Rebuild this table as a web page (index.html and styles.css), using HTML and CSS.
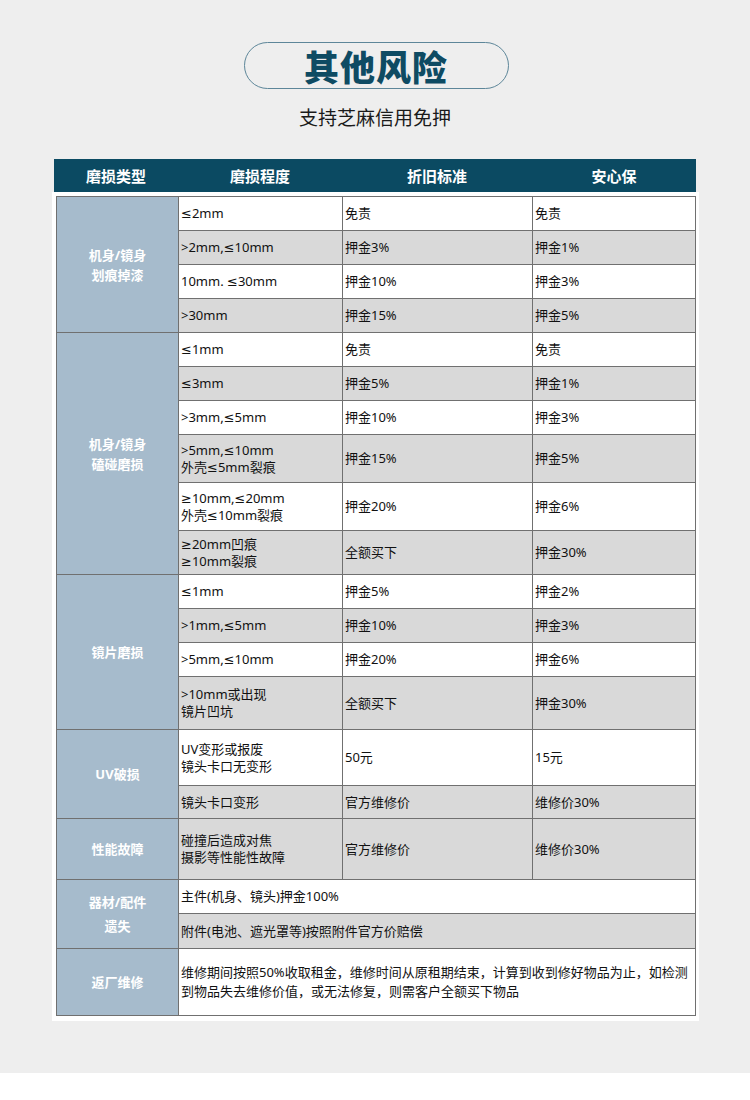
FILE: index.html
```html
<!DOCTYPE html>
<html lang="zh">
<head>
<meta charset="utf-8">
<link rel="stylesheet" href="styles.css">
</head>
<body>
<div class="page">
  <div class="title-wrap">
    <div class="pill"><h1 class="title">其他风险</h1></div>
    <p class="subtitle">支持芝麻信用免押</p>
  </div>
  <div class="panel">
    <div class="thead">
      <div>磨损类型</div>
      <div>磨损程度</div>
      <div>折旧标准</div>
      <div>安心保</div>
    </div>
    <div class="tbody">
      <table class="grid">
        <colgroup>
          <col class="c1"><col class="c2"><col class="c3"><col class="c4">
        </colgroup>
        <tr class="h34"><td class="cat" rowspan="4">机身/镜身<br>划痕掉漆</td><td>≤2mm</td><td>免责</td><td>免责</td></tr>
        <tr class="h34 g"><td>&gt;2mm,≤10mm</td><td>押金3%</td><td>押金1%</td></tr>
        <tr class="h34"><td>10mm. ≤30mm</td><td>押金10%</td><td>押金3%</td></tr>
        <tr class="h34 g"><td>&gt;30mm</td><td>押金15%</td><td>押金5%</td></tr>

        <tr class="h34"><td class="cat" rowspan="6">机身/镜身<br>磕碰磨损</td><td>≤1mm</td><td>免责</td><td>免责</td></tr>
        <tr class="h34 g"><td>≤3mm</td><td>押金5%</td><td>押金1%</td></tr>
        <tr class="h34"><td>&gt;3mm,≤5mm</td><td>押金10%</td><td>押金3%</td></tr>
        <tr class="h48 g"><td>&gt;5mm,≤10mm<br>外壳≤5mm裂痕</td><td>押金15%</td><td>押金5%</td></tr>
        <tr class="h48"><td>≥10mm,≤20mm<br>外壳≤10mm裂痕</td><td>押金20%</td><td>押金6%</td></tr>
        <tr class="h44 g"><td>≥20mm凹痕<br>≥10mm裂痕</td><td>全额买下</td><td>押金30%</td></tr>

        <tr class="h34"><td class="cat" rowspan="4">镜片磨损</td><td>≤1mm</td><td>押金5%</td><td>押金2%</td></tr>
        <tr class="h34 g"><td>&gt;1mm,≤5mm</td><td>押金10%</td><td>押金3%</td></tr>
        <tr class="h34"><td>&gt;5mm,≤10mm</td><td>押金20%</td><td>押金6%</td></tr>
        <tr class="h53 g"><td>&gt;10mm或出现<br>镜片凹坑</td><td>全额买下</td><td>押金30%</td></tr>

        <tr class="h56"><td class="cat" rowspan="2">UV破损</td><td>UV变形或报废<br>镜头卡口无变形</td><td>50元</td><td>15元</td></tr>
        <tr class="h33 g"><td>镜头卡口变形</td><td>官方维修价</td><td>维修价30%</td></tr>

        <tr class="h61 g"><td class="cat">性能故障</td><td>碰撞后造成对焦<br>摄影等性能性故障</td><td>官方维修价</td><td>维修价30%</td></tr>

        <tr class="h34"><td class="cat tall" rowspan="2">器材/配件<br>遗失</td><td colspan="3">主件(机身、镜头)押金100%</td></tr>
        <tr class="h35 g"><td colspan="3">附件(电池、遮光罩等)按照附件官方价赔偿</td></tr>

        <tr class="h67"><td class="cat">返厂维修</td><td colspan="3" class="long">维修期间按照50%收取租金，维修时间从原租期结束，计算到收到修好物品为止，如检测<br>到物品失去维修价值，或无法修复，则需客户全额买下物品</td></tr>
      </table>
    </div>
  </div>
</div>
</body>
</html>
```

FILE: styles.css
```css
* { box-sizing: border-box; }
html, body { margin: 0; padding: 0; background: #ffffff; }
body { font-family: "Noto Sans CJK SC", "Noto Sans", "Liberation Sans", sans-serif; color: #111; }

.page {
  background: #eeeeee;
  height: 1073px;
  padding-top: 42px;
}

.title-wrap { display: flex; flex-direction: column; align-items: center; }

.pill {
  width: 265px;
  height: 47px;
  margin-left: 2px;
  border: 1.5px solid #5d8699;
  border-radius: 24px;
  display: flex;
  align-items: center;
  justify-content: center;
}
.title {
  margin: 0;
  font-size: 35px;
  font-weight: 900;
  color: #0e4b63;
  letter-spacing: 1px;
  line-height: 1;
}
.subtitle {
  margin: 16px 0 0 0;
  font-size: 19px;
  line-height: 24px;
  color: #1a1a1a;
}

.panel {
  width: 647px;
  margin: 30px 0 0 52px;
}
.thead {
  margin: 0 3px 0 2px;
  height: 33px;
  background: #0b4a62;
  display: grid;
  grid-template-columns: 124px 164px 190px 164px;
  align-items: center;
  color: #ffffff;
  font-size: 15px;
  font-weight: 700;
  text-align: center;
}
.tbody {
  background: #ffffff;
  padding: 4px 4px 5px 4px;
}

.grid {
  border-collapse: collapse;
  table-layout: fixed;
  width: 639px;
  font-family: "Noto Sans", "DejaVu Sans", "Noto Sans CJK SC", sans-serif;
  font-size: 13px;
  line-height: 17px;
  color: #111;
}
.c1 { width: 122px; }
.c2 { width: 164px; }
.c3 { width: 190px; }
.c4 { width: 163px; }

.grid td {
  border: 1px solid #707070;
  padding: 0 2px;
  vertical-align: middle;
  background: #ffffff;
}
.grid tr.g td { background: #d9d9d9; }
.grid td.cat, .grid tr.g td.cat {
  background: #a6bbcc;
  color: #ffffff;
  font-weight: 700;
  text-align: center;
  line-height: 20px;
}
.grid td.tall { line-height: 24px; }
.grid td.long { line-height: 19px; }

.h33 { height: 33px; }
.h34 { height: 34px; }
.h35 { height: 35px; }
.h44 { height: 44px; }
.h48 { height: 48px; }
.h53 { height: 53px; }
.h56 { height: 56px; }
.h61 { height: 61px; }
.h67 { height: 67px; }
```
